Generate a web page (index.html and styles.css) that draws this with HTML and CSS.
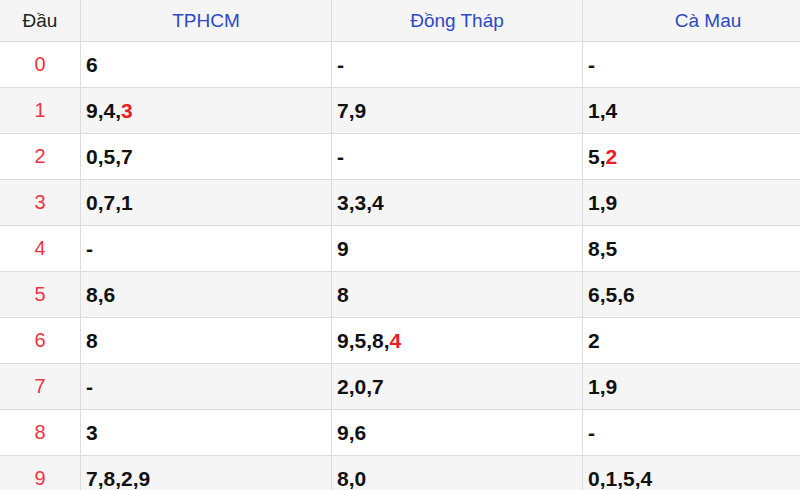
FILE: index.html
```html
<!DOCTYPE html>
<html lang="vi">
<head>
<meta charset="utf-8">
<link rel="stylesheet" href="styles.css">
</head>
<body>
<table class="loto">
  <thead>
    <tr><th class="head-col">Đầu</th><th class="prov">TPHCM</th><th class="prov">Đồng Tháp</th><th class="prov">Cà Mau</th></tr>
  </thead>
  <tbody>
    <tr><td class="head">0</td><td>6</td><td>-</td><td>-</td></tr>
    <tr><td class="head">1</td><td>9,4,<span class="hit">3</span></td><td>7,9</td><td>1,4</td></tr>
    <tr><td class="head">2</td><td>0,5,7</td><td>-</td><td>5,<span class="hit">2</span></td></tr>
    <tr><td class="head">3</td><td>0,7,1</td><td>3,3,4</td><td>1,9</td></tr>
    <tr><td class="head">4</td><td>-</td><td>9</td><td>8,5</td></tr>
    <tr><td class="head">5</td><td>8,6</td><td>8</td><td>6,5,6</td></tr>
    <tr><td class="head">6</td><td>8</td><td>9,5,8,<span class="hit">4</span></td><td>2</td></tr>
    <tr><td class="head">7</td><td>-</td><td>2,0,7</td><td>1,9</td></tr>
    <tr><td class="head">8</td><td>3</td><td>9,6</td><td>-</td></tr>
    <tr><td class="head">9</td><td>7,8,2,9</td><td>8,0</td><td>0,1,5,4</td></tr>
  </tbody>
</table>
</body>
</html>
```
FILE: styles.css
```css
html, body {
  margin: 0;
  padding: 0;
  background: #fff;
  overflow: hidden;
}
.loto {
  border-collapse: collapse;
  table-layout: fixed;
  width: 834px;
  font-family: "Liberation Sans", Arial, sans-serif;
}
.loto th, .loto td {
  border: 1px solid #dcdcdc;
  padding: 0 5px;
}
.loto tr > :first-child { border-left: none; }
.loto thead tr > * { border-top: none; }
.loto th {
  height: 40px;
  padding-top: 1px;
  font-weight: normal;
  font-size: 19px;
  color: #2c49c4;
  background: #f5f5f5;
  text-align: center;
}
.loto th.head-col {
  width: 70px;
  color: #222;
}
.loto td {
  height: 45px;
  font-size: 21px;
  font-weight: bold;
  color: #111;
}
.loto tbody tr:nth-child(even) td { background: #f5f5f5; }
.loto td.head {
  text-align: center;
  font-weight: normal;
  font-size: 20px;
  color: #ee3344;
}
.hit { color: #ee1c25; }
```
